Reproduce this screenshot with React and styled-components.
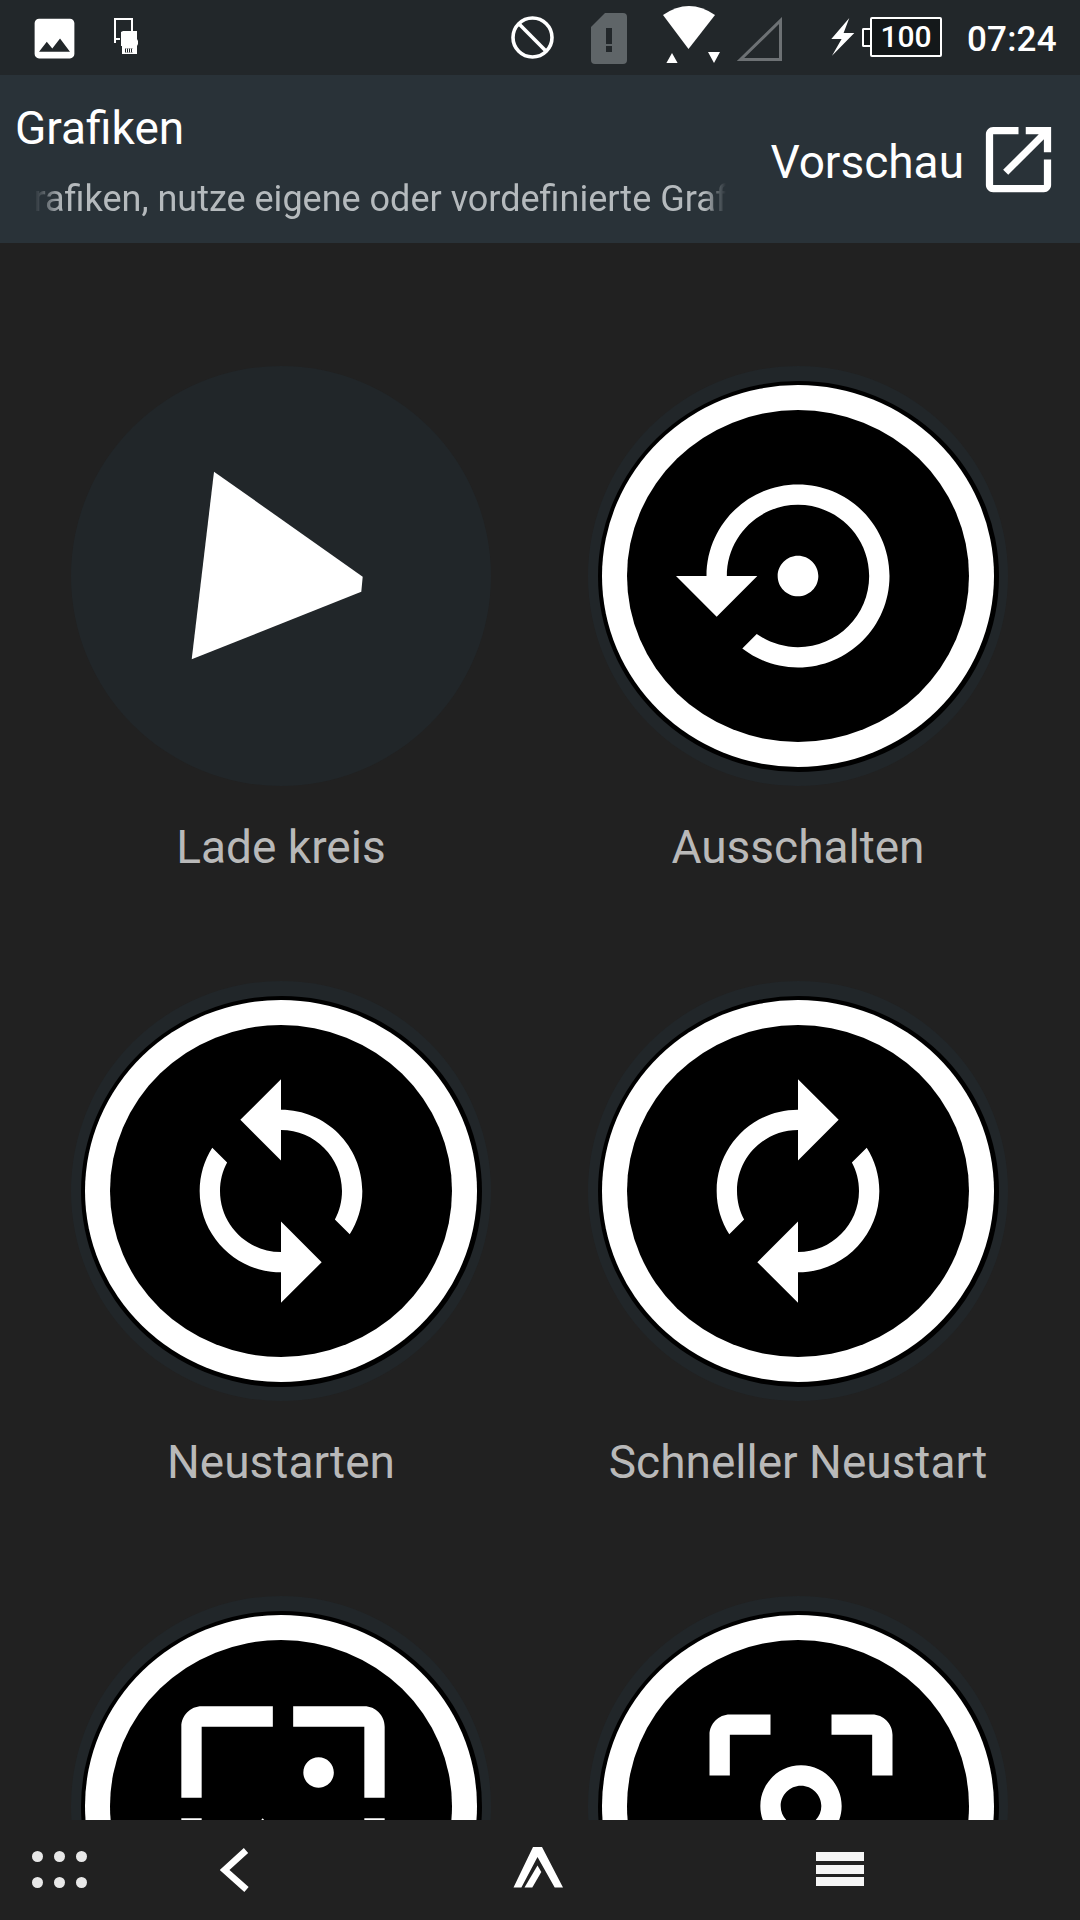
import React from 'react';
import styled, { createGlobalStyle } from 'styled-components';

const GlobalStyle = createGlobalStyle`
    html, body {
        margin: 0;
        padding: 0;
        background: #212121;
    }
`;

const Screen = styled.div`
    width: 1080px;
    height: 1920px;
    display: flex;
    flex-direction: column;
    overflow: hidden;
    background: #212121;
    font-family: Roboto, "Liberation Sans", sans-serif;
`;

const StatusBar = styled.div`
    height: 75px;
    flex: none;
    display: flex;
    align-items: flex-start;
    background: #22272a;
    color: #fff;
`;

const StatusSlot = styled.div`
    flex: none;
    display: flex;
    margin-left: ${p => p.$left}px;
    margin-top: ${p => p.$top}px;
`;

const BatteryNub = styled.div`
    width: 8px;
    height: 19px;
    margin-top: 11px;
    box-sizing: border-box;
    border: 2px solid #fff;
    border-right: none;
    background: #14181a;
    border-radius: 2px 0 0 2px;
`;

const BatteryBody = styled.div`
    width: 72px;
    height: 40px;
    box-sizing: border-box;
    border: 2px solid #fff;
    border-radius: 2px;
    background: #14181a;
    font-size: 30px;
    font-weight: 500;
    line-height: 36px;
    text-align: center;
`;

const Clock = styled.div`
    font-size: 35px;
    font-weight: 500;
    line-height: 42px;
    letter-spacing: 0.2px;
`;

const Header = styled.header`
    height: 168px;
    flex: none;
    display: flex;
    justify-content: space-between;
    background: #293238;
    color: #fff;
`;

const HeaderText = styled.div`
    padding: 27px 0 0 15px;
`;

const Title = styled.h1`
    margin: 0;
    font-size: 46px;
    font-weight: 400;
    line-height: 52px;
`;

const Marquee = styled.div`
    width: 692px;
    margin: 23px 0 0 19px;
    overflow: hidden;
    font-size: 36px;
    line-height: 44px;
    color: #b5babd;
    white-space: nowrap;
    mask-image: linear-gradient(90deg, transparent 0, #000 28px, #000 670px, transparent 100%);
`;

const MarqueeText = styled.div`
    margin-left: -25px;
`;

const PreviewButton = styled.div`
    display: flex;
    align-items: center;
    gap: 11px;
    padding-right: 18px;
`;

const PreviewLabel = styled.span`
    padding-top: 5px;
    font-size: 46px;
    line-height: 52px;
`;

const Content = styled.main`
    flex: 1;
    min-height: 0;
    overflow: hidden;
    padding: 123px 0 0 71px;
`;

const TileGrid = styled.div`
    display: grid;
    grid-template-columns: 420px 420px;
    column-gap: 97px;
    row-gap: 107px;
`;

const Tile = styled.div`
    display: flex;
    flex-direction: column;
    align-items: center;
`;

const Halo = styled.div`
    width: 420px;
    height: 420px;
    display: flex;
    align-items: center;
    justify-content: center;
    border-radius: 50%;
    background: #212629;
`;

const RingEdge = styled.div`
    width: 401px;
    height: 391px;
    display: flex;
    align-items: center;
    justify-content: center;
    border-radius: 50%;
    background: #000;
`;

const Ring = styled.div`
    width: 392px;
    height: 382px;
    display: flex;
    align-items: center;
    justify-content: center;
    border-radius: 50%;
    background: #fff;
`;

const Disc = styled.div`
    width: 342px;
    height: 332px;
    display: flex;
    align-items: center;
    justify-content: center;
    border-radius: 50%;
    background: #000;
`;

const Glyph = styled.svg`
    width: 244px;
    height: 244px;
    flex: none;
    fill: #fff;
    margin: ${p => p.$dy || 0}px 0 0 ${p => p.$dx || 0}px;
    transform: ${p => (p.$mirror ? 'scaleX(-1)' : 'none')};
`;

const TileLabel = styled.div`
    margin-top: 34px;
    font-size: 46px;
    line-height: 54px;
    color: #b9b9b9;
    white-space: nowrap;
`;

const NavBar = styled.nav`
    height: 100px;
    flex: none;
    display: flex;
    align-items: flex-start;
    background: #212121;
`;

const NavSlot = styled.div`
    flex: none;
    display: flex;
    margin-left: ${p => p.$left}px;
    margin-top: ${p => p.$top}px;
`;

const Dots = styled.div`
    display: grid;
    grid-template-columns: repeat(3, 11px);
    gap: 15px 11px;
`;

const Dot = styled.span`
    width: 11px;
    height: 11px;
    border-radius: 50%;
    background: #e8e8e8;
`;

const MenuBars = styled.div`
    display: flex;
    flex-direction: column;
    gap: 3.5px;
`;

const MenuBar = styled.span`
    width: 48px;
    height: 9px;
    background: #f5f5f5;
`;

const icons = {
    image: 'M21 19V5c0-1.1-.9-2-2-2H5c-1.1 0-2 .9-2 2v14c0 1.1.9 2 2 2h14c1.1 0 2-.9 2-2zM8.5 13.5l2.5 3.01L14.5 12l4.5 6H5l3.5-4.5z',
    openNew: 'M19 19H5V5h7V3H5c-1.11 0-2 .9-2 2v14c0 1.1.89 2 2 2h14c1.1 0 2-.9 2-2v-7h-2v7zM14 3v2h3.59l-9.83 9.83 1.41 1.41L19 6.41V10h2V3h-7z',
    restore: 'M14 12c0-1.1-.9-2-2-2s-2 .9-2 2 .9 2 2 2 2-.9 2-2zm-2-9c-4.97 0-9 4.03-9 9H0l4 4 4-4H5c0-3.87 3.13-7 7-7s7 3.13 7 7-3.13 7-7 7c-1.51 0-2.91-.49-4.06-1.3l-1.42 1.44C8.04 20.3 9.94 21 12 21c4.97 0 9-4.03 9-9s-4.03-9-9-9z',
    sync: 'M12 4V1L8 5l4 4V6c3.31 0 6 2.69 6 6 0 1.01-.25 1.97-.7 2.8l1.46 1.46C19.54 15.03 20 13.57 20 12c0-4.42-3.58-8-8-8zm0 14c-3.31 0-6-2.69-6-6 0-1.01.25-1.97.7-2.8L5.24 7.74C4.46 8.97 4 10.43 4 12c0 4.42 3.58 8 8 8v3l4-4-4-4v3z',
    wallpaper: 'M4 4h7V2H4c-1.1 0-2 .9-2 2v7h2V4zm6 9l-4 5h12l-3-4-2.03 2.71L10 13zm7-4.5c0-.83-.67-1.5-1.5-1.5S14 7.67 14 8.5s.67 1.5 1.5 1.5S17 9.33 17 8.5zM20 2h-7v2h7v7h2V4c0-1.1-.9-2-2-2zm0 18h-7v2h7c1.1 0 2-.9 2-2v-7h-2v7zM4 13H2v7c0 1.1.9 2 2 2h7v-2H4v-7z',
    focus: 'M5 15H3v4c0 1.1.9 2 2 2h4v-2H5v-4zM5 5h4V3H5c-1.1 0-2 .9-2 2v4h2V5zm14-2h-4v2h4v4h2V5c0-1.1-.9-2-2-2zm0 16h-4v2h4c1.1 0 2-.9 2-2v-4h-2v4zM12 8c-2.21 0-4 1.79-4 4s1.79 4 4 4 4-1.79 4-4-1.79-4-4-4zm0 6c-1.1 0-2-.9-2-2s.9-2 2-2 2 .9 2 2-.9 2-2 2z',
};

// the last two tiles run under the nav bar, their labels are not on screen
const tiles = [
    { id: 'load', label: 'Lade kreis', play: true },
    { id: 'off', label: 'Ausschalten', icon: 'restore' },
    { id: 'reboot', label: 'Neustarten', icon: 'sync' },
    { id: 'fast', label: 'Schneller Neustart', icon: 'sync', mirror: true },
    { id: 'wall', icon: 'wallpaper', dx: 3, dy: 4 },
    { id: 'focus', icon: 'focus', dx: 5 },
];

const PlayIcon = () => (
    <svg width="420" height="420" viewBox="0 0 420 420">
        <polygon points="143,105.7 291.7,210.7 290.3,225.7 120.7,293.3" fill="#fff" />
    </svg>
);

const ButtonTile = ({ item }) => (
    <Tile>
        <Halo>
            {item.play ? <PlayIcon /> : (
                <RingEdge>
                    <Ring>
                        <Disc>
                            <Glyph viewBox="0 0 24 24" $mirror={item.mirror} $dx={item.dx} $dy={item.dy}>
                                <path d={icons[item.icon]} />
                            </Glyph>
                        </Disc>
                    </Ring>
                </RingEdge>
            )}
        </Halo>
        {item.label && <TileLabel>{item.label}</TileLabel>}
    </Tile>
);

const SdIcon = () => (
    <svg width="24" height="37" viewBox="0 0 24 37">
        <path d="M1 25V1h17v12" fill="none" stroke="#fff" strokeWidth="2" />
        <path d="M1 20h5v2H1z" fill="#fff" />
        <path d="M9 13h14v8l1 2v3l-1 2v8H8V28H7V14z" fill="#fff" />
        <path d="M11 30.5h8v4h-8z" fill="#22272a" />
        <path d="M12 30.5h1v4h-1zM14 30.5h1v4h-1zM16 30.5h1v4h-1zM18 30.5h1v4h-1z" fill="#fff" />
    </svg>
);

const BlockIcon = () => (
    <svg width="43" height="43" viewBox="0 0 43 43">
        <circle cx="21.5" cy="21.5" r="19.5" fill="none" stroke="#fff" strokeWidth="3.6" />
        <path d="M7.6 7.6l27.8 27.8" stroke="#fff" strokeWidth="3.6" />
    </svg>
);

const SimIcon = () => (
    <svg width="36" height="51" viewBox="0 0 36 51">
        <path d="M14 0h18a4 4 0 0 1 4 4v43a4 4 0 0 1-4 4H4a4 4 0 0 1-4-4V14z" fill="#5f6568" />
        <path d="M15 15h6v16h-6zM15 33h6v6h-6z" fill="#22272a" />
    </svg>
);

const WifiIcon = () => (
    <svg width="57" height="58" viewBox="0 0 57 58">
        <path d="M0 9Q26 -9 52 9L25.5 43z" fill="#fff" />
        <path d="M3.4 57l5.6-10 5.6 10zM45 46h12l-6 11z" fill="#fff" />
    </svg>
);

const SignalIcon = () => (
    <svg width="45" height="44" viewBox="0 0 45 44">
        <path d="M3.5 42.5L43.5 3.5V42.5z" fill="none" stroke="#6d7174" strokeWidth="3" />
    </svg>
);

const BoltIcon = () => (
    <svg width="24" height="38" viewBox="0 0 24 38">
        <polygon points="18.3,0 0.3,21 10.6,21 1,37.7 23.3,15 12.6,15" fill="#fff" />
    </svg>
);

const ChevronIcon = () => (
    <svg width="30" height="46" viewBox="0 0 30 46">
        <path d="M26 3.5L4.5 23 26.5 42.5" fill="none" stroke="#fff" strokeWidth="6.5" />
    </svg>
);

const LogoIcon = () => (
    <svg width="50" height="41" viewBox="0 0 50 41">
        <path d="M20 0h9l21 40.5h-8.3L24.5 10 8.4 40.5H.5z" fill="#fff" />
        <path d="M24.5 18.5l3.8 6.5-9 15.5h-7.8z" fill="#fff" />
    </svg>
);

const App = () => (
    <Screen>
        <GlobalStyle />
        <StatusBar>
            <StatusSlot $left={28} $top={12}>
                <svg width="53" height="53" viewBox="0 0 24 24" fill="#fff"><path d={icons.image} /></svg>
            </StatusSlot>
            <StatusSlot $left={33} $top={18}><SdIcon /></StatusSlot>
            <StatusSlot $left={373} $top={16}><BlockIcon /></StatusSlot>
            <StatusSlot $left={37} $top={13}><SimIcon /></StatusSlot>
            <StatusSlot $left={36} $top={6}><WifiIcon /></StatusSlot>
            <StatusSlot $left={17} $top={17}><SignalIcon /></StatusSlot>
            <StatusSlot $left={49} $top={18}><BoltIcon /></StatusSlot>
            <StatusSlot $left={7} $top={17}>
                <BatteryNub />
                <BatteryBody>100</BatteryBody>
            </StatusSlot>
            <StatusSlot $left={25} $top={19}><Clock>07:24</Clock></StatusSlot>
        </StatusBar>
        <Header>
            <HeaderText>
                <Title>Grafiken</Title>
                <Marquee>
                    <MarqueeText>Grafiken, nutze eigene oder vordefinierte Grafiken</MarqueeText>
                </Marquee>
            </HeaderText>
            <PreviewButton>
                <PreviewLabel>Vorschau</PreviewLabel>
                <svg width="87" height="87" viewBox="0 0 24 24" fill="#fff"><path d={icons.openNew} /></svg>
            </PreviewButton>
        </Header>
        <Content>
            <TileGrid>
                {tiles.map(item => <ButtonTile key={item.id} item={item} />)}
            </TileGrid>
        </Content>
        <NavBar>
            <NavSlot $left={32} $top={31}>
                <Dots>
                    {[0, 1, 2, 3, 4, 5].map(i => <Dot key={i} />)}
                </Dots>
            </NavSlot>
            <NavSlot $left={133} $top={27}><ChevronIcon /></NavSlot>
            <NavSlot $left={263} $top={27}><LogoIcon /></NavSlot>
            <NavSlot $left={253} $top={32}>
                <MenuBars>
                    <MenuBar />
                    <MenuBar />
                    <MenuBar />
                </MenuBars>
            </NavSlot>
        </NavBar>
    </Screen>
);

export default App;
